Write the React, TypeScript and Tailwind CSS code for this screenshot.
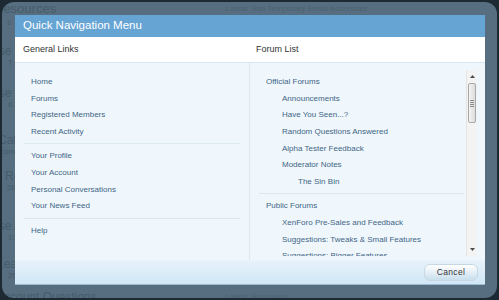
import React from "react";

type Item = { t: string; l: 0 | 1 | 2 };

const leftGroups: string[][] = [
  ["Home", "Forums", "Registered Members", "Recent Activity"],
  ["Your Profile", "Your Account", "Personal Conversations", "Your News Feed"],
  ["Help"],
];

const forumGroups: Item[][] = [
  [
    { t: "Official Forums", l: 0 },
    { t: "Announcements", l: 1 },
    { t: "Have You Seen...?", l: 1 },
    { t: "Random Questions Answered", l: 1 },
    { t: "Alpha Tester Feedback", l: 1 },
    { t: "Moderator Notes", l: 1 },
    { t: "The Sin Bin", l: 2 },
  ],
  [
    { t: "Public Forums", l: 0 },
    { t: "XenForo Pre-Sales and Feedback", l: 1 },
    { t: "Suggestions: Tweaks & Small Features", l: 1 },
    { t: "Suggestions: Bigger Features", l: 1 },
    { t: "Styling and Customization", l: 1 },
  ],
];

const levelPad: Record<number, string> = {
  0: "pl-[9px]",
  1: "pl-[25px]",
  2: "pl-[41px]",
};

function Divider({ className }: { className: string }) {
  return <div className={"h-px bg-[#dce8f0] mt-[3px] mb-[4px] " + className} />;
}

function BackgroundPage() {
  return (
    <div className="flex flex-col text-[#455c6b] select-none">
      <div className="flex items-center h-[11px] mt-[1px]">
        <div className="w-[231px] shrink-0 -ml-[8px] text-[13px] leading-[11px]">Resources</div>
        <div className="text-[8px] text-[#4a6271] whitespace-nowrap">Latest: Sun Temporary Email Addresses</div>
      </div>
      <div className="text-[8px] leading-[10px] mt-[4px] pl-[5px]">s</div>
      <div className="text-[12px] leading-[14px] mt-[16px] -ml-[12px]">Use Discussions</div>
      <div className="text-[8px] leading-[10px] pl-[6px]">T</div>
      <div className="text-[12px] leading-[14px] mt-[18px] -ml-[12px]">Use Reviews</div>
      <div className="text-[8px] leading-[10px] pl-[6px]">6</div>
      <div className="text-[12px] leading-[14px] mt-[23px] -ml-[4px]">Catholic</div>
      <div className="text-[8px] leading-[10px] -ml-[2px]">com</div>
      <div className="text-[12px] leading-[14px] mt-[12px] pl-[3px]">Re</div>
      <div className="text-[8px] leading-[10px] pl-[5px]">58</div>
      <div className="text-[12px] leading-[14px] mt-[26px] -ml-[12px]">Use Abouts</div>
      <div className="text-[8px] leading-[10px] pl-[6px]">19</div>
      <div className="text-[12px] leading-[14px] mt-[14px] -ml-[5px]">Learners</div>
      <div className="text-[8px] leading-[10px] pl-[6px]">26</div>
      <div className="flex items-center mt-[9px]">
        <div className="w-[229px] shrink-0 -ml-[6px] text-[12px] leading-[14px]">Account Questions</div>
        <div className="text-[8px] text-[#4a6271]">Latest: Removing</div>
      </div>
    </div>
  );
}

function ScrollBar() {
  return (
    <div className="w-[11px] h-full flex flex-col bg-[#f3f3f3] border-l border-[#e4e4e4]">
      <div className="h-[13px] flex items-center justify-center">
        <svg width="5" height="3" viewBox="0 0 5 3">
          <path d="M0 3 L2.5 0 L5 3 Z" fill="#4a4a4a" />
        </svg>
      </div>
      <div className="h-[40px] mx-[1px] rounded-[2px] border border-[#a9a9a9] bg-gradient-to-r from-[#f4f4f4] to-[#dcdcdc] flex items-center justify-center">
        <div className="flex flex-col gap-[1px]">
          <div className="w-[4px] h-px bg-[#8a8a8a]" />
          <div className="w-[4px] h-px bg-[#8a8a8a]" />
          <div className="w-[4px] h-px bg-[#8a8a8a]" />
          <div className="w-[4px] h-px bg-[#8a8a8a]" />
        </div>
      </div>
      <div className="flex-1" />
      <div className="h-[13px] flex items-center justify-center">
        <svg width="5" height="3" viewBox="0 0 5 3">
          <path d="M0 0 L2.5 3 L5 0 Z" fill="#4a4a4a" />
        </svg>
      </div>
    </div>
  );
}

export default function App() {
  return (
    <div
      className="w-[499px] h-[300px] overflow-hidden bg-[#1d2a33] p-[2px]"
      style={{ fontFamily: '"Liberation Sans", Arial, sans-serif' }}
    >
      <div className="relative w-full h-full rounded-[12px] bg-[#566e7f] overflow-hidden">
        <BackgroundPage />

        <div className="absolute left-[13px] top-[13px] w-[470px] h-[270px] flex flex-col bg-[#f0f7fc] border-b border-[#9dbad0]">
          <div className="h-[22px] shrink-0 bg-[#66a4d3] flex items-center pl-[8px] text-white text-[11.5px]">
            Quick Navigation Menu
          </div>

          <div className="h-[26px] shrink-0 bg-white border-b border-[#d6e7f2] grid grid-cols-[235px_1fr] items-center text-[9px] text-[#333]">
            <div className="pl-[8px]">General Links</div>
            <div className="pl-[6px]">Forum List</div>
          </div>

          <div className="flex-1 flex min-h-0">
            <div className="w-[235px] shrink-0 border-r border-[#dce8f0] pt-[11px] text-[8px] text-[#3e6585]">
              {leftGroups.map((g, gi) => (
                <div key={gi}>
                  {gi > 0 && <Divider className="mx-[9px]" />}
                  {g.map((t) => (
                    <div key={t} className="pl-[16px] leading-[16.6px] h-[16.6px]">
                      {t}
                    </div>
                  ))}
                </div>
              ))}
            </div>

            <div className="flex-1 min-w-0 pl-[7px] pr-[8px] pt-[7px]">
              <div className="h-[185.5px] flex">
                <div className="flex-1 min-w-0 overflow-hidden pt-[4.2px] text-[8px] text-[#3e6585]">
                  {forumGroups.map((g, gi) => (
                    <div key={gi}>
                      {gi > 0 && <Divider className="mx-[2px]" />}
                      {g.map((it) => (
                        <div
                          key={it.t}
                          className={levelPad[it.l] + " leading-[16.6px] h-[16.6px] whitespace-nowrap"}
                        >
                          {it.t}
                        </div>
                      ))}
                    </div>
                  ))}
                </div>
                <ScrollBar />
              </div>
            </div>
          </div>

          <div className="h-[24px] shrink-0 bg-gradient-to-b from-[#e8f3fa] to-[#d1e7f6] flex items-start justify-end pr-[7px] pt-[4px]">
            <button className="w-[54px] h-[17px] rounded-[6px] border border-[#c6d8e4] bg-gradient-to-b from-white to-[#c9dfed] text-[8.5px] tracking-[0.3px] text-[#333] flex items-center justify-center">
              Cancel
            </button>
          </div>
        </div>
      </div>
    </div>
  );
}
